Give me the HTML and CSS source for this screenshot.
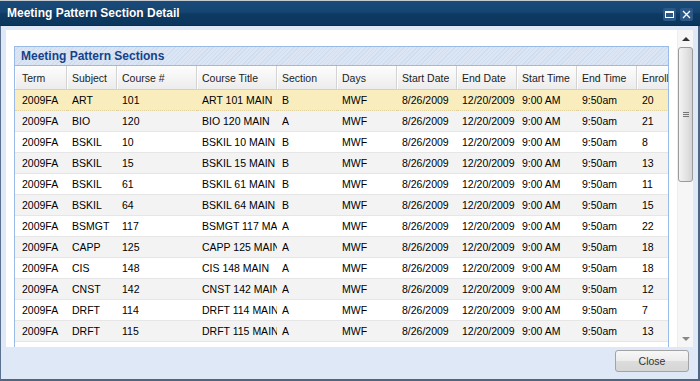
FILE: index.html
```html
<!DOCTYPE html>
<html>
<head>
<meta charset="utf-8">
<link rel="stylesheet" href="styles.css">
</head>
<body>
<div class="win">
  <div class="win-head">
    <span class="win-title">Meeting Pattern Section Detail</span>
    <div class="tools">
      <span class="tool"><svg width="13" height="13" viewBox="0 0 13 13"><rect x="2.5" y="3.5" width="8" height="6" fill="none" stroke="#fff" stroke-width="1"/><rect x="2" y="3" width="9" height="2" fill="#fff"/></svg></span>
      <span class="tool"><svg width="13" height="13" viewBox="0 0 13 13"><path d="M3 3 L10 10 M10 3 L3 10" stroke="#fff" stroke-width="1.3" fill="none"/></svg></span>
    </div>
  </div>
  <div class="win-body">
    <div class="content">
      <div class="scroll-area">
        <div class="grid-panel">
          <div class="panel-head">Meeting Pattern Sections</div>
          <div class="grid-wrap">
            <table class="grid">
              <colgroup>
                <col class="c-term"><col class="c-subj"><col class="c-80"><col class="c-80"><col class="c-60"><col class="c-60"><col class="c-60"><col class="c-60"><col class="c-60"><col class="c-60"><col class="c-60">
              </colgroup>
              <thead>
                <tr><th>Term</th><th>Subject</th><th>Course #</th><th>Course Title</th><th>Section</th><th>Days</th><th>Start Date</th><th>End Date</th><th>Start Time</th><th>End Time</th><th>Enrollment</th></tr>
              </thead>
              <tbody>
                <tr class="sel"><td>2009FA</td><td>ART</td><td>101</td><td>ART 101 MAIN</td><td>B</td><td>MWF</td><td>8/26/2009</td><td>12/20/2009</td><td>9:00 AM</td><td>9:50am</td><td>20</td></tr>
                <tr class="alt"><td>2009FA</td><td>BIO</td><td>120</td><td>BIO 120 MAIN</td><td>A</td><td>MWF</td><td>8/26/2009</td><td>12/20/2009</td><td>9:00 AM</td><td>9:50am</td><td>21</td></tr>
                <tr><td>2009FA</td><td>BSKIL</td><td>10</td><td>BSKIL 10 MAIN</td><td>B</td><td>MWF</td><td>8/26/2009</td><td>12/20/2009</td><td>9:00 AM</td><td>9:50am</td><td>8</td></tr>
                <tr class="alt"><td>2009FA</td><td>BSKIL</td><td>15</td><td>BSKIL 15 MAIN</td><td>B</td><td>MWF</td><td>8/26/2009</td><td>12/20/2009</td><td>9:00 AM</td><td>9:50am</td><td>13</td></tr>
                <tr><td>2009FA</td><td>BSKIL</td><td>61</td><td>BSKIL 61 MAIN</td><td>B</td><td>MWF</td><td>8/26/2009</td><td>12/20/2009</td><td>9:00 AM</td><td>9:50am</td><td>11</td></tr>
                <tr class="alt"><td>2009FA</td><td>BSKIL</td><td>64</td><td>BSKIL 64 MAIN</td><td>B</td><td>MWF</td><td>8/26/2009</td><td>12/20/2009</td><td>9:00 AM</td><td>9:50am</td><td>15</td></tr>
                <tr><td>2009FA</td><td>BSMGT</td><td>117</td><td>BSMGT 117 MAIN</td><td>A</td><td>MWF</td><td>8/26/2009</td><td>12/20/2009</td><td>9:00 AM</td><td>9:50am</td><td>22</td></tr>
                <tr class="alt"><td>2009FA</td><td>CAPP</td><td>125</td><td>CAPP 125 MAIN</td><td>A</td><td>MWF</td><td>8/26/2009</td><td>12/20/2009</td><td>9:00 AM</td><td>9:50am</td><td>18</td></tr>
                <tr><td>2009FA</td><td>CIS</td><td>148</td><td>CIS 148 MAIN</td><td>A</td><td>MWF</td><td>8/26/2009</td><td>12/20/2009</td><td>9:00 AM</td><td>9:50am</td><td>18</td></tr>
                <tr class="alt"><td>2009FA</td><td>CNST</td><td>142</td><td>CNST 142 MAIN</td><td>A</td><td>MWF</td><td>8/26/2009</td><td>12/20/2009</td><td>9:00 AM</td><td>9:50am</td><td>12</td></tr>
                <tr><td>2009FA</td><td>DRFT</td><td>114</td><td>DRFT 114 MAIN</td><td>A</td><td>MWF</td><td>8/26/2009</td><td>12/20/2009</td><td>9:00 AM</td><td>9:50am</td><td>7</td></tr>
                <tr class="alt"><td>2009FA</td><td>DRFT</td><td>115</td><td>DRFT 115 MAIN</td><td>A</td><td>MWF</td><td>8/26/2009</td><td>12/20/2009</td><td>9:00 AM</td><td>9:50am</td><td>13</td></tr>
              </tbody>
            </table>
          </div>
        </div>
      </div>
      <div class="vscroll">
        <div class="arrow up"></div>
        <div class="track">
          <div class="thumb"><span class="grip"></span><span class="grip"></span><span class="grip"></span></div>
        </div>
        <div class="arrow down"></div>
      </div>
    </div>
    <div class="footer">
      <button class="btn">Close</button>
    </div>
  </div>
</div>
</body>
</html>
```

FILE: styles.css
```css
html, body {
  margin: 0;
  padding: 0;
  background: #c8ccd2;
  font-family: "Liberation Sans", Arial, sans-serif;
}

.win {
  width: 700px;
  height: 381px;
  box-sizing: border-box;
  border-top: 1px solid #c5cad0;
  background: #dfe8f6;
  display: flex;
  flex-direction: column;
  overflow: hidden;
}

.win-head {
  height: 25px;
  flex: none;
  box-sizing: border-box;
  background: linear-gradient(#1a4b78 0%, #164573 46%, #0e3a63 54%, #0b355c 100%);
  border-bottom: 1px solid #0a2d50;
  display: flex;
  align-items: center;
  justify-content: space-between;
  padding: 0 7px 0 7px;
}

.win-title {
  color: #fff;
  font-weight: bold;
  font-size: 12px;
  text-shadow: 0 0 1px rgba(0,0,0,0.4);
}

.tools {
  display: flex;
  gap: 4px;
  margin-top: 3px;
}

.tool {
  width: 13px;
  height: 13px;
  background: #2b5886;
  border-radius: 2px;
  display: block;
}

.tool svg { display: block; }

.win-body {
  flex: 1;
  display: flex;
  flex-direction: column;
  border-left: 1px solid #5b7190;
  border-right: 2px solid #4f6580;
  border-bottom: 2px solid #4f6580;
  padding: 4px 5px 0 5px;
  background: #dfe8f6;
}

.content {
  height: 317px;
  flex: none;
  background: #fff;
  display: flex;
  overflow: hidden;
}

.scroll-area {
  flex: 1;
  padding: 16px 8px 0 8px;
  overflow: hidden;
}

.grid-panel {
  border: 1px solid #99bbe8;
  border-bottom: 0;
  height: 400px;
}

.panel-head {
  height: 18px;
  line-height: 18px;
  border-bottom: 1px solid #99bbe8;
  background: repeating-linear-gradient(135deg, #dbe5f4 0 2px, #d0ddef 2px 3px);
  color: #15428b;
  font-weight: bold;
  font-size: 12px;
  padding-left: 6px;
}

.grid-wrap {
  overflow: hidden;
}

.grid {
  table-layout: fixed;
  border-collapse: separate;
  border-spacing: 0;
  width: 682px;
  font-size: 10.5px;
  color: #000;
}

.c-term { width: 52px; }
.c-subj { width: 50px; }
.c-80 { width: 80px; }
.c-60 { width: 60px; }

.grid th {
  height: 23px;
  padding: 0 0 0 5px;
  text-align: left;
  font-weight: normal;
  color: #222;
  background: linear-gradient(#fdfdfd, #ececec);
  border-bottom: 1px solid #d0d0d0;
  border-right: 1px solid #d3d3d3;
  box-shadow: inset 1px 0 0 #fff;
  white-space: nowrap;
  overflow: hidden;
}

.grid td {
  height: 20px;
  padding: 0 0 0 5px;
  border-bottom: 1px solid #e6e6e6;
  white-space: nowrap;
  overflow: hidden;
  text-overflow: clip;
}

.grid th:first-child, .grid td:first-child { padding-left: 7px; }

.grid tr.alt td { background: #f3f3f3; }
.grid tr.sel td {
  background: #f9edbe;
  border-bottom: 1px dotted #e0d3a0;
}

.vscroll {
  width: 16px;
  flex: none;
  display: flex;
  flex-direction: column;
  background: #f6f6f6;
  border-left: 1px solid #eeeeee;
  box-sizing: border-box;
}

.arrow {
  height: 17px;
  flex: none;
  display: flex;
  align-items: center;
  justify-content: center;
}

.arrow::before {
  content: "";
  width: 0;
  height: 0;
  border-left: 4px solid transparent;
  border-right: 4px solid transparent;
}

.arrow.up::before { border-bottom: 4px solid #333; }
.arrow.down::before { border-top: 4px solid #888; }

.track {
  flex: 1;
}

.thumb {
  margin: 0 0 0 0;
  height: 135px;
  box-sizing: border-box;
  border: 1px solid #9a9a9a;
  border-radius: 3px;
  background: linear-gradient(90deg, #f4f4f4, #e2e2e2 60%, #d4d4d4);
  display: flex;
  flex-direction: column;
  align-items: center;
  justify-content: center;
  gap: 1px;
}

.grip {
  width: 6px;
  height: 1px;
  background: #777;
}

.footer {
  flex: 1;
  display: flex;
  justify-content: flex-end;
  align-items: flex-start;
  padding: 3px 4px 0 0;
}

.btn {
  width: 74px;
  height: 22px;
  border: 1px solid #a3a3a3;
  border-radius: 3px;
  background: linear-gradient(#f7f7f7 0%, #ececec 50%, #dcdcdc 51%, #d6d6d6 100%);
  font-family: "Liberation Sans", Arial, sans-serif;
  font-size: 10.5px;
  color: #333;
  padding: 0;
}
```
